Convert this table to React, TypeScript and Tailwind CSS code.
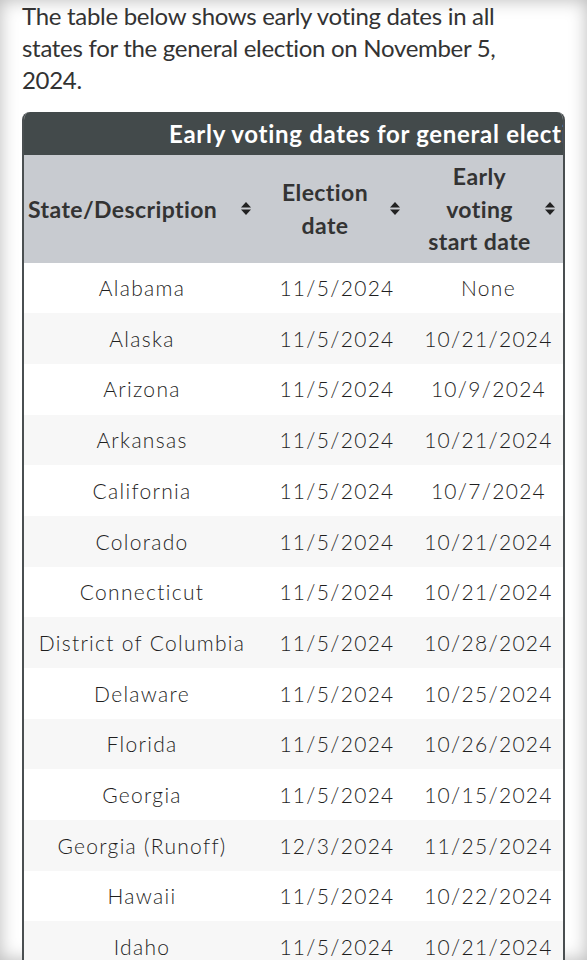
const rows = [
  ["Alabama", "11/5/2024", "None"],
  ["Alaska", "11/5/2024", "10/21/2024"],
  ["Arizona", "11/5/2024", "10/9/2024"],
  ["Arkansas", "11/5/2024", "10/21/2024"],
  ["California", "11/5/2024", "10/7/2024"],
  ["Colorado", "11/5/2024", "10/21/2024"],
  ["Connecticut", "11/5/2024", "10/21/2024"],
  ["District of Columbia", "11/5/2024", "10/28/2024"],
  ["Delaware", "11/5/2024", "10/25/2024"],
  ["Florida", "11/5/2024", "10/26/2024"],
  ["Georgia", "11/5/2024", "10/15/2024"],
  ["Georgia (Runoff)", "12/3/2024", "11/25/2024"],
  ["Hawaii", "11/5/2024", "10/22/2024"],
  ["Idaho", "11/5/2024", "10/21/2024"],
];

function SortIcon() {
  return (
    <svg width="10" height="13" viewBox="0 0 10 13" className="shrink-0 text-[#222]">
      <path d="M0 5.5 L5 0 L10 5.5 Z" fill="currentColor" />
      <path d="M0 7.5 L10 7.5 L5 13 Z" fill="currentColor" />
    </svg>
  );
}

export default function App() {
  return (
    <div className="relative w-[587px] h-[960px] overflow-hidden bg-white font-['Lato',sans-serif] text-[#333] shadow-[inset_0_0_18px_rgba(0,0,0,0.28)]">
      <div className="px-[22px]">
        <p className="w-[495px] text-[24px] leading-[32px] tracking-[-0.3px]">
          The table below shows early voting dates in all states for the general election on November 5, 2024.
        </p>

        {/* Table */}
        <div className="mt-4 w-[543px] rounded-t-[8px] overflow-hidden border-x-2 border-[#4a4f51]">
          <div className="h-[43px] bg-[#434a4b] flex items-center pl-[145px] whitespace-nowrap text-white font-bold text-[24px] tracking-[0.7px]">
            Early voting dates for general elections, 2024
          </div>

          <div className="grid grid-cols-[236px_154px_1fr] bg-[#c8cbd0] font-bold text-[23px] tracking-[0.4px] leading-[32.5px] text-[#333]">
            <div className="flex items-center justify-between pl-[4px] pr-[9px] py-[5px]">
              <span>State/Description</span>
              <SortIcon />
            </div>
            <div className="flex items-center pr-[14px] py-[5px]">
              <span className="flex-1 text-center">Election<br />date</span>
              <SortIcon />
            </div>
            <div className="flex items-center pr-[8px] py-[5px]">
              <span className="flex-1 text-center">Early<br />voting<br />start date</span>
              <SortIcon />
            </div>
          </div>

          {rows.map((r, i) => (
            <div
              key={i}
              className={
                "grid grid-cols-[236px_154px_1fr] h-[50.7px] items-center text-center font-light text-[21px] tracking-[1.3px] text-[#1f1f1f] whitespace-nowrap " +
                (i % 2 === 1 ? "bg-[#f7f7f7]" : "bg-white")
              }
            >
              <div>{r[0]}</div>
              <div>{r[1]}</div>
              <div>{r[2]}</div>
            </div>
          ))}
        </div>
      </div>
    </div>
  );
}
